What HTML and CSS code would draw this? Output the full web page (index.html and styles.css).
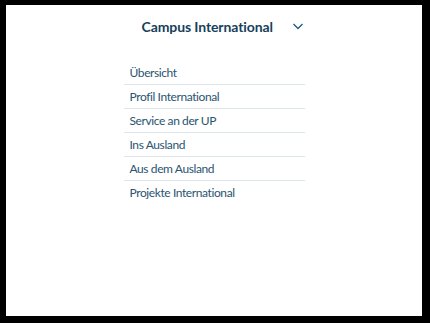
FILE: index.html
```html
<!DOCTYPE html>
<html lang="de">

<head>
    <meta charset="UTF-8">
    <meta name="viewport" content="width=device-width, initial-scale=1.0">
    <title>Campus International</title>
    <link rel="stylesheet" href="styles.css">
</head>

<body>
    <div class="panel">
        <nav class="menu">
            <div class="menu-head">
                <span class="menu-title">Campus International</span>
                <svg class="chevron" width="10" height="7" viewBox="0 0 10 7">
                    <path d="M0.5 1 L5 5.5 L9.5 1" fill="none" stroke="#1f5a7d" stroke-width="1.3"/>
                </svg>
            </div>
            <ul class="menu-list">
                <li><a href="#">Übersicht</a></li>
                <li><a href="#">Profil International</a></li>
                <li><a href="#">Service an der UP</a></li>
                <li><a href="#">Ins Ausland</a></li>
                <li><a href="#">Aus dem Ausland</a></li>
                <li><a href="#">Projekte International</a></li>
            </ul>
        </nav>
    </div>
</body>

</html>
```

FILE: styles.css
```css
html,
body {
    height: 100%;
}

body {
    margin: 0;
    padding: 5px 8px 7px 6px;
    box-sizing: border-box;
    background-color: #000000;
    font-family: Lato, "Open Sans", sans-serif;
}

.panel {
    background-color: #ffffff;
    height: 100%;
    display: flex;
    justify-content: center;
}

.menu {
    width: 181px;
}

.menu-head {
    display: flex;
    align-items: center;
    height: 42px;
    padding: 0 2px 0 18px;
}

.menu-title {
    font-weight: bold;
    font-size: 14px;
    letter-spacing: -0.1px;
    color: #173f5c;
}

.chevron {
    margin-left: auto;
}

.menu-list {
    list-style: none;
    margin: 14px 0 0 0;
    padding: 0;
}

.menu-list li {
    border-bottom: 1px solid #dde6ea;
}

.menu-list li:last-child {
    border-bottom: none;
}

.menu-list a {
    display: block;
    height: 23px;
    line-height: 23px;
    padding-left: 6px;
    font-size: 12px;
    letter-spacing: -0.4px;
    color: #2a5470;
    text-decoration: none;
}
```
